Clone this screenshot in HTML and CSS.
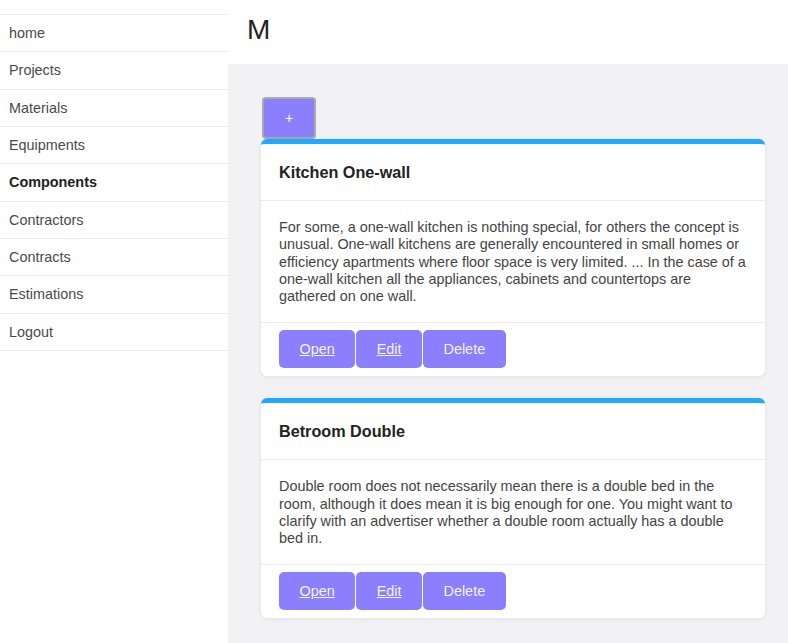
FILE: index.html
```html
<!DOCTYPE html>
<html lang="en">
<head>
<meta charset="utf-8">
<title>Components</title>
<link rel="stylesheet" href="styles.css">
</head>
<body>
<div class="app">
  <aside class="sidebar">
    <nav class="nav">
      <a class="nav-item" href="#">home</a>
      <a class="nav-item" href="#">Projects</a>
      <a class="nav-item" href="#">Materials</a>
      <a class="nav-item" href="#">Equipments</a>
      <a class="nav-item active" href="#">Components</a>
      <a class="nav-item" href="#">Contractors</a>
      <a class="nav-item" href="#">Contracts</a>
      <a class="nav-item" href="#">Estimations</a>
      <a class="nav-item" href="#">Logout</a>
    </nav>
  </aside>
  <main class="main">
    <header class="topbar">
      <h1 class="title">M</h1>
    </header>
    <section class="content">
      <button class="add-btn" type="button">+</button>
      <article class="card">
        <div class="card-head"><h2 class="card-title">Kitchen One-wall</h2></div>
        <div class="card-body">For some, a one-wall kitchen is nothing special, for others the concept is unusual. One-wall kitchens are generally encountered in small homes or efficiency apartments where floor space is very limited. ... In the case of a one-wall kitchen all the appliances, cabinets and countertops are gathered on one wall.</div>
        <div class="card-foot">
          <a class="btn" href="#">Open</a>
          <a class="btn" href="#">Edit</a>
          <button class="btn" type="button">Delete</button>
        </div>
      </article>
      <article class="card">
        <div class="card-head"><h2 class="card-title">Betroom Double</h2></div>
        <div class="card-body">Double room does not necessarily mean there is a double bed in the room, although it does mean it is big enough for one. You might want to clarify with an advertiser whether a double room actually has a double bed in.</div>
        <div class="card-foot">
          <a class="btn" href="#">Open</a>
          <a class="btn" href="#">Edit</a>
          <button class="btn" type="button">Delete</button>
        </div>
      </article>
    </section>
  </main>
</div>
</body>
</html>
```
FILE: styles.css
```css
* { box-sizing: border-box; }
html, body { margin: 0; padding: 0; }
body {
  font-family: "Liberation Sans", Arial, sans-serif;
  background: #ffffff;
  color: #444;
}
.app {
  display: flex;
  min-height: 643px;
}
.sidebar {
  width: 228px;
  flex: none;
  background: #fff;
  padding-top: 14px;
}
.nav {
  display: flex;
  flex-direction: column;
  border-top: 1px solid #ebebef;
}
.nav-item {
  display: flex;
  align-items: center;
  height: 37.33px;
  padding: 0 9px;
  font-size: 14.4px;
  color: #4a4a4a;
  text-decoration: none;
  border-bottom: 1px solid #ebebef;
}
.nav-item.active {
  font-weight: bold;
  color: #222;
}
.main {
  flex: 1;
  display: flex;
  flex-direction: column;
}
.topbar {
  height: 64px;
  background: #fff;
  display: flex;
  align-items: center;
  padding-left: 19px;
}
.title {
  margin: 0;
  font-size: 28px;
  font-weight: normal;
  color: #222;
  padding-bottom: 4px;
}
.content {
  flex: 1;
  background: #f2f2f5;
  padding: 33px 23px 25px 33px;
  display: flex;
  flex-direction: column;
  align-items: stretch;
}
.add-btn {
  align-self: flex-start;
  width: 54px;
  height: 42px;
  margin-left: 1px;
  background: #8b7ffd;
  color: #fff;
  font-family: inherit;
  font-size: 14px;
  border: 2px solid #a9a9a9;
  border-radius: 4px;
  padding: 0;
}
.card {
  background: #fff;
  border-top: 5px solid #22a8ff;
  border-radius: 6px;
  box-shadow: 0 1px 4px rgba(40, 40, 80, 0.08);
  display: flex;
  flex-direction: column;
}
.card + .card {
  margin-top: 22px;
}
.card-head {
  height: 57px;
  display: flex;
  align-items: center;
  padding: 0 18px;
  border-bottom: 1px solid #ebebef;
}
.card-title {
  margin: 0;
  font-size: 16.2px;
  font-weight: bold;
  color: #222;
  padding-top: 1px;
}
.card-body {
  padding: 18px 18px 17px;
  font-size: 14.4px;
  line-height: 17.25px;
  color: #444;
  border-bottom: 1px solid #ebebef;
}
.card-foot {
  display: flex;
  gap: 1px;
  padding: 7px 18px 8px;
}
.btn {
  display: inline-flex;
  align-items: center;
  justify-content: center;
  height: 38px;
  padding: 0 20.5px;
  background: #8b7ffd;
  color: #f4f2ff;
  font-family: inherit;
  font-size: 14.4px;
  border: none;
  border-radius: 5px;
  text-decoration: underline;
}
button.btn {
  text-decoration: none;
}
```
